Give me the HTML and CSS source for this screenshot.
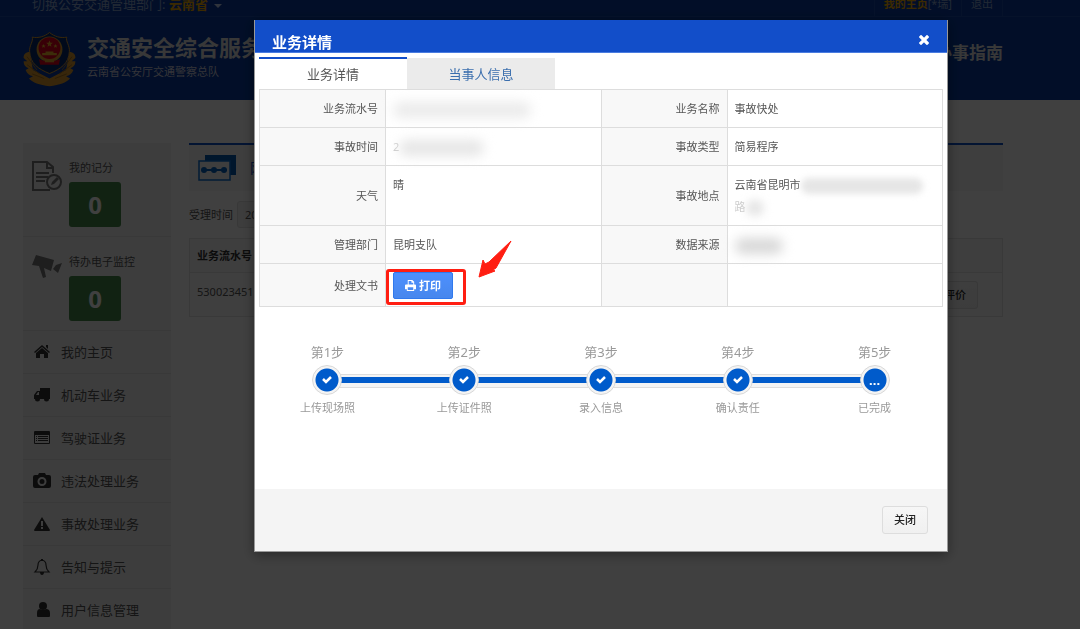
FILE: index.html
```html
<!DOCTYPE html>
<html lang="zh-CN">
<head>
    <meta charset="UTF-8">
    <meta name="viewport" content="width=device-width, initial-scale=1.0">
    <title>交通安全综合服务管理平台</title>
    <link rel="stylesheet" href="styles.css">
</head>
<body>
    <!-- 页头 -->
    <header class="header">
        <div class="topbar">
            <div class="container topbar-inner">
                <div class="switch">切换公安交通管理部门: <a href="#" class="province">云南省</a><span class="caret"></span></div>
                <nav class="user-links">
                    <a href="#"><b>我的主页</b>[*瑞]</a>
                    <a href="#">退出</a>
                </nav>
            </div>
        </div>
        <div class="container brand">
            <svg class="emblem" viewBox="0 0 160 166">
                <path d="M20 62C8 62 1 70 2 80l11 10-11 0c0 12 6 18 15 21l-9 5c4 11 12 17 22 19l-12 7c12 12 30 20 62 23 32-3 50-11 62-23l-12-7c10-2 18-8 22-19l-9-5c9-3 15-9 15-21h-11l11-10c1-10-6-18-18-18l-10 54-50 26-50-26z" fill="#d9982c"/>
                <path d="M80 3C66 15 46 21 28 17c4 12-10 26-8 44 2 36 26 52 60 66 34-14 58-30 60-66 2-18-12-32-8-44C114 21 94 15 80 3z" fill="#06296e" stroke="#d9982c" stroke-width="3"/>
                <circle cx="80" cy="54" r="39" fill="#d9a02c"/>
                <circle cx="80" cy="50" r="33" fill="#e0001c"/>
                <path d="M80 27l3 7h7l-6 5 2 7-6-4-6 4 2-7-6-5h7zM62 38l2 4h4l-3 3 1 4-4-2-4 2 1-4-3-3h4zM98 38l2 4h4l-3 3 1 4-4-2-4 2 1-4-3-3h4zM58 72h44v-7H92v-5H68v5H58z" fill="#f0b52a"/>
                <path d="M48 84l14 4h36l14-4-4 16H52z" fill="#e0001c"/>
                <path d="M66 84h28v9H66z" fill="#e0a62c"/>
                <path d="M12 76l30 40M12 100l38 28M28 128l36 14M148 76l-30 40M148 100l-38 28M132 128l-36 14" fill="none" stroke="#a8701c" stroke-width="3"/>
            </svg>
            <div class="brand-text">
                <div class="brand-title">交通安全综合服务管理平台</div>
                <div class="brand-sub">云南省公安厅交通警察总队</div>
            </div>
            <a href="#" class="guide">办事指南</a>
        </div>
    </header>

    <div class="container page">
        <!-- 左侧菜单 -->
        <aside class="sidebar">
            <div class="stat">
                <svg class="stat-icon" viewBox="0 0 30 30" fill="none" stroke="#777" stroke-width="2">
                    <path d="M21 12V6l-6-5H1v28h17M15 1v6h6M4 12h13M4 16h12M4 20h9"/>
                    <circle cx="22" cy="21" r="7"/>
                    <path d="M19 24l1-3 5-5 2 2-5 5z" fill="#777" stroke="none"/>
                </svg>
                <div>
                    <div class="stat-label">我的记分</div>
                    <div class="stat-value">0</div>
                </div>
            </div>
            <div class="stat">
                <svg class="stat-icon" viewBox="0 0 30 30" fill="#777">
                    <path d="M4 0l18 5-3 11-7-3 2 9-3 1-4-12-7-1zM30 8l-4 10-5-4 3-4z"/>
                </svg>
                <div>
                    <div class="stat-label">待办电子监控</div>
                    <div class="stat-value">0</div>
                </div>
            </div>
            <nav class="menu">
                <a href="#"><svg viewBox="0 0 18 16"><path d="M9 1l8 7-1 1-7-6-7 6-1-1zM13 1h2v4l-2-2zM9 4l6 5v5h-4v-4H7v4H3V9z"/></svg>我的主页</a>
                <a href="#"><svg viewBox="0 0 18 16"><path d="M7 1h10v11h-1a2.500 2.500 0 0 1-5 0H7a2.500 2.500 0 0 1-5 0H1V8l3-4h3zM3 8h3V5H5z" fill-rule="evenodd"/></svg>机动车业务</a>
                <a href="#"><svg viewBox="0 0 18 16"><path d="M2 1h14a1 1 0 0 1 1 1v11a1 1 0 0 1-1 1H2a1 1 0 0 1-1-1V2a1 1 0 0 1 1-1zm0 4v8h14V5zM3 6h1v1H3zm2 0h10v1H5zM3 8h1v1H3zm2 0h10v1H5zm-2 2h1v1H3zm2 0h10v1H5z" fill-rule="evenodd"/></svg>驾驶证业务</a>
                <a href="#"><svg viewBox="0 0 18 16"><path d="M6 0h6l1 2h3a2 2 0 0 1 2 2v9a2 2 0 0 1-2 2H2a2 2 0 0 1-2-2V4a2 2 0 0 1 2-2h3zm3 4a4.500 4.500 0 1 0 0 9 4.500 4.500 0 0 0 0-9zm0 2a2.500 2.500 0 1 1 0 5 2.500 2.500 0 0 1 0-5z" fill-rule="evenodd"/></svg>违法处理业务</a>
                <a href="#"><svg viewBox="0 0 18 16"><path d="M9 1l8 13q0 1-1 1H2q-1 0-1-1zM8 5v5h2V5zm0 6v2h2v-2z" fill-rule="evenodd"/></svg>事故处理业务</a>
                <a href="#"><svg viewBox="0 0 18 16"><path d="M2 13q3-3 3-7 0-4 4-5 4 1 4 5 0 4 3 7z" fill="none" stroke="#333" stroke-width="1.200"/><path d="M7 13h4q0 3-2 3t-2-3zM8 0h2v2H8z"/></svg>告知与提示</a>
                <a href="#"><svg viewBox="0 0 18 16"><circle cx="10" cy="4" r="4"/><path d="M4 14V11q0-4 3-4 3 2 6 0 4 0 4 4v3q0 1-1 1H5q-1 0-1-1z"/></svg>用户信息管理</a>
            </nav>
        </aside>

        <!-- 业务列表 -->
        <main class="main">
            <div class="main-head">
                <svg class="main-icon" viewBox="0 0 38 26">
                    <path d="M7 0h31v20H7z" fill="#0058b0"/>
                    <path d="M1 6h31v19H1z" fill="#f5f5f5" stroke="#0d6fd0" stroke-width="1.500"/>
                    <path d="M4 15h25" stroke="#0060c0" stroke-width="2"/>
                    <circle cx="6" cy="15" r="3" fill="#0060c0"/><circle cx="16" cy="15" r="3" fill="#0060c0"/><circle cx="26" cy="15" r="3" fill="#0060c0"/>
                </svg>
                <h1>网办进度</h1>
            </div>
            <div class="filter">
                <label for="accept-date">受理时间</label>
                <input id="accept-date" type="text" value="2019-01-01">
            </div>
            <table class="list">
                <thead>
                    <tr><th>业务流水号</th><th></th></tr>
                </thead>
                <tbody>
                    <tr><td>530023451</td><td class="list-action"><button type="button" class="btn">评价</button></td></tr>
                </tbody>
            </table>
        </main>
    </div>

    <!-- 业务详情弹窗 -->
    <div class="overlay">
        <section class="dialog" role="dialog" aria-labelledby="dialog-title">
            <div class="dialog-head">
                <h2 id="dialog-title">业务详情</h2>
                <button type="button" class="close" aria-label="关闭窗口">
                    <svg viewBox="0 0 10 10"><path d="M2 2l6 6M8 2l-6 6" stroke="#fff" stroke-width="3.200" stroke-linecap="square"/></svg>
                </button>
            </div>

            <div class="dialog-body">
                <div class="tabs">
                    <button type="button" class="tab active">业务详情</button>
                    <button type="button" class="tab">当事人信息</button>
                </div>

                <table class="detail">
                    <colgroup><col class="col-label"><col class="col-value"><col class="col-label"><col class="col-value"></colgroup>
                    <tr>
                        <th>业务流水号</th>
                        <td><span class="smear smear-long"></span></td>
                        <th>业务名称</th>
                        <td>事故快处</td>
                    </tr>
                    <tr>
                        <th>事故时间</th>
                        <td><span class="faded">2</span><span class="smear smear-mid"></span></td>
                        <th>事故类型</th>
                        <td>简易程序</td>
                    </tr>
                    <tr>
                        <th>天气</th>
                        <td>晴</td>
                        <th>事故地点</th>
                        <td>云南省昆明市<span class="smear smear-line"></span><br><span class="faded">路</span><span class="smear smear-short"></span></td>
                    </tr>
                    <tr>
                        <th>管理部门</th>
                        <td>昆明支队</td>
                        <th>数据来源</th>
                        <td><span class="smear smear-source"></span></td>
                    </tr>
                    <tr>
                        <th>处理文书</th>
                        <td>
                            <div class="print-wrap">
                                <button type="button" class="btn-print">
                                    <svg viewBox="0 0 12 12"><path d="M3 0h5l2 2v3H9V3H7V1H4v4H3zM1 5h10q1 0 1 1v4h-2v2H2v-2H0V6q0-1 1-1zm2 3v3h6V8z" fill="#fff" fill-rule="evenodd"/></svg>打印
                                </button>
                                <span class="mark"></span>
                                <svg class="arrow" viewBox="0 0 34 38"><path d="M33 1L18 28l-3 2 2 1-16 6 4-17 2 4 4-2z" fill="#ff1e12" stroke="#ff1e12" stroke-linejoin="round"/></svg>
                            </div>
                        </td>
                        <th></th>
                        <td></td>
                    </tr>
                </table>

                <ol class="steps">
                    <li><span class="step-no">第1步</span><span class="node"><i><svg viewBox="0 0 12 12"><path d="M2 5l3 3 5-5"/></svg></i></span><span class="step-name">上传现场照</span></li>
                    <li><span class="step-no">第2步</span><span class="node"><i><svg viewBox="0 0 12 12"><path d="M2 5l3 3 5-5"/></svg></i></span><span class="step-name">上传证件照</span></li>
                    <li><span class="step-no">第3步</span><span class="node"><i><svg viewBox="0 0 12 12"><path d="M2 5l3 3 5-5"/></svg></i></span><span class="step-name">录入信息</span></li>
                    <li><span class="step-no">第4步</span><span class="node"><i><svg viewBox="0 0 12 12"><path d="M2 5l3 3 5-5"/></svg></i></span><span class="step-name">确认责任</span></li>
                    <li><span class="step-no">第5步</span><span class="node"><i>...</i></span><span class="step-name">已完成</span></li>
                </ol>
            </div>

            <div class="dialog-foot">
                <button type="button" class="btn">关闭</button>
            </div>
        </section>
    </div>
</body>
</html>
```

FILE: styles.css
```css
* {
    box-sizing: border-box;
}

body {
    margin: 0;
    height: 100vh;
    overflow: hidden;
    background: #fff;
    color: #555;
    font: 11px/22px "Noto Sans", "Noto Sans CJK SC", sans-serif;
}

a {
    color: inherit;
    text-decoration: none;
}

button {
    font: inherit;
    cursor: pointer;
}

.container {
    margin: 0 77px 0 23px;
}

/* 页头 */
.header {
    height: 100px;
    background: #083a9e;
    color: #ddd;
}

.topbar {
    border-bottom: 1px solid #1848a8;
    color: #8aa4d0;
}

.topbar-inner {
    display: flex;
    justify-content: space-between;
    align-items: flex-end;
    height: 16px;
    overflow: hidden;
    line-height: 24px;
}

.switch {
    padding-left: 9px;
    font-size: 13px;
}

.province {
    color: #f0a800;
    font-weight: bold;
}

.caret {
    display: inline-block;
    margin-left: 6px;
    border: 4px solid transparent;
    border-top-color: #c0d0f0;
    border-bottom: 0;
    vertical-align: middle;
}

.user-links {
    display: flex;
}

.user-links a {
    padding: 0 9px;
    border-right: 1px solid #1848a8;
}

.user-links a:first-child {
    border-left: 1px solid #1848a8;
}

.user-links b {
    color: #f0a800;
}

.brand {
    display: flex;
    align-items: center;
    height: 83px;
}

.emblem {
    width: 53px;
    height: 56px;
    margin-right: 11px;
}

.brand-title {
    font-size: 22px;
    font-weight: bold;
    line-height: 24px;
    white-space: nowrap;
}

.brand-sub {
    margin-top: 2px;
    line-height: 22px;
    color: #ccd;
}

.guide {
    margin-left: auto;
    padding-bottom: 12px;
    font-size: 17px;
    font-weight: bold;
}

/* 左侧菜单 */
.page {
    display: flex;
    align-items: flex-start;
    gap: 18px;
    padding-top: 43px;
}

.sidebar {
    flex: 0 0 148px;
    background: #f3f3f3;
}

.stat {
    display: flex;
    gap: 7px;
    height: 94px;
    padding: 14px 9px;
    border-bottom: 1px solid #e4e4e4;
}

.stat-icon {
    width: 30px;
    height: 30px;
    margin-top: 4px;
}

.stat-value {
    width: 52px;
    margin-top: 3px;
    border-radius: 3px;
    background: #468847;
    color: #fff;
    font-size: 24px;
    font-weight: bold;
    line-height: 45px;
    text-align: center;
}

.menu a {
    display: flex;
    align-items: center;
    gap: 10px;
    height: 43px;
    padding-left: 10px;
    border-bottom: 1px solid #e4e4e4;
    font-size: 13px;
}

.menu svg {
    width: 18px;
    height: 16px;
    fill: #333;
}

/* 业务列表 */
.main {
    flex: 1;
}

.main-head {
    display: flex;
    align-items: center;
    gap: 14px;
    height: 48px;
    padding-left: 9px;
    border-top: 2px solid #0d4fc8;
    background: #f5f5f5;
}

.main-icon {
    width: 38px;
    height: 26px;
}

.main-head h1 {
    margin: 0;
    color: #0d4fc8;
    font-size: 14px;
    font-weight: normal;
}

.filter {
    display: flex;
    align-items: center;
    gap: 4px;
    padding: 10px 0;
}

.filter input {
    width: 120px;
    height: 27px;
    padding: 0 7px;
    border: 1px solid #e0e0e0;
    border-radius: 3px;
    background: #f3f3f3;
    color: #555;
    font: inherit;
}

.list {
    width: 100%;
    border: 1px solid #e4e4e4;
    border-collapse: collapse;
    text-align: left;
}

.list th {
    height: 34px;
    padding: 0 7px;
    background: #f8f8f8;
    color: #333;
}

.list td {
    height: 44px;
    padding: 8px 24px 7px 7px;
    border-top: 1px solid #e4e4e4;
    background: #f9f9f9;
    vertical-align: top;
}

.list .list-action {
    text-align: right;
}

.btn {
    height: 28px;
    padding: 0 11px;
    border: 1px solid #ddd;
    border-radius: 3px;
    background: linear-gradient(#f6f6f6, #f0f0f0);
    color: #222;
    font-weight: 500;
    line-height: 24px;
}

/* 弹窗 */
.overlay {
    position: fixed;
    inset: 0;
    padding: 20px 132px 0 254px;
    background: rgba(0, 0, 0, 0.75);
}

.dialog {
    border: 1px solid #999;
    border-top: 0;
    background: #fff;
    box-shadow: 0 3px 12px rgba(0, 0, 0, 0.4);
}

.dialog-head {
    display: flex;
    justify-content: space-between;
    align-items: flex-end;
    height: 33px;
    padding: 0 17px;
    border-bottom: 1px solid #4a7ce0;
    background: #124ec9;
    color: #fff;
}

.dialog-head h2 {
    margin: 0;
    font-size: 15px;
    line-height: 20px;
}

.close {
    padding: 0 1px 7px;
    border: 0;
    background: none;
    line-height: 0;
}

.close svg {
    width: 10px;
    height: 10px;
}

.dialog-body {
    padding: 4px 4px 70px;
}

.tabs {
    display: flex;
}

.tab {
    width: 148px;
    height: 32px;
    padding: 0;
    border: 0;
    border-top: 1px solid #fff;
    background: #ebebeb;
    color: #3a6ead;
    font-size: 13px;
}

.tab.active {
    border-top: 2px solid #124ec9;
    background: #fff;
    color: #555;
}

.detail {
    width: 100%;
    border-collapse: collapse;
    table-layout: fixed;
}

.col-label {
    width: 126px;
}

.detail th,
.detail td {
    padding: 8px 7px 7px;
    border: 1px solid #ddd;
}

.detail th {
    background: #f8f8f8;
    font-weight: normal;
    text-align: right;
}

.detail td {
    vertical-align: top;
    text-align: left;
}

/* 隐去的个人信息 */
.smear {
    display: inline-block;
    height: 16px;
    border-radius: 8px;
    background: #e6e6e6;
    filter: blur(6px);
    vertical-align: middle;
}

.smear-long {
    width: 138px;
    background: #ebebeb;
}

.smear-mid {
    width: 85px;
}

.smear-line {
    width: 122px;
    filter: blur(3px);
}

.smear-short {
    width: 18px;
    filter: blur(4px);
}

.smear-source {
    width: 48px;
    background: #d8d8d8;
}

.faded {
    color: #ccc;
}

.print-wrap {
    position: relative;
}

.btn-print {
    display: flex;
    align-items: center;
    gap: 3px;
    height: 27px;
    padding: 0 11px;
    border: 1px solid #3079ed;
    border-radius: 2px;
    background: linear-gradient(#4d90fe, #4787ed);
    color: #fff;
    font-weight: bold;
}

.btn-print svg {
    width: 11px;
    height: 11px;
}

.mark {
    position: absolute;
    top: -3px;
    left: -7px;
    width: 80px;
    height: 36px;
    border: 3px solid #ff1e12;
    border-radius: 3px;
}

.arrow {
    position: absolute;
    top: -32px;
    left: 85px;
    width: 34px;
    height: 38px;
}

/* 办理步骤 */
.steps {
    display: grid;
    grid-template-columns: repeat(5, 1fr);
    margin: 34px 0 0;
    padding: 0;
    list-style: none;
    color: #999;
    text-align: center;
}

.steps li {
    display: flex;
    flex-direction: column;
    align-items: center;
}

.step-no {
    font-size: 13px;
}

.node {
    position: relative;
    display: flex;
    justify-content: center;
    width: 100%;
    margin: 2px 0;
}

.node i {
    position: relative;
    z-index: 1;
    display: flex;
    justify-content: center;
    align-items: center;
    width: 30px;
    height: 30px;
    border: 1px solid #d8d8d8;
    border-radius: 50%;
    background: radial-gradient(circle, #005bcb 11px, #f4f4f4 12px);
    color: #fff;
    font-size: 13px;
    font-style: normal;
    font-weight: bold;
}

.node svg {
    width: 12px;
    height: 12px;
    fill: none;
    stroke: #fff;
    stroke-width: 2.5;
}

/* 连接到下一步的线 */
.steps li:not(:last-child) .node::after {
    content: "";
    position: absolute;
    top: 9px;
    left: 50%;
    width: 100%;
    height: 12px;
    border: solid #ddd;
    border-width: 1px 0;
    background: linear-gradient(#f4f4f4 2px, #005bcb 2px, #005bcb 8px, #f4f4f4 8px);
}

.dialog-foot {
    display: flex;
    justify-content: flex-end;
    padding: 17px 19px;
    background: #f4f4f4;
}
```
